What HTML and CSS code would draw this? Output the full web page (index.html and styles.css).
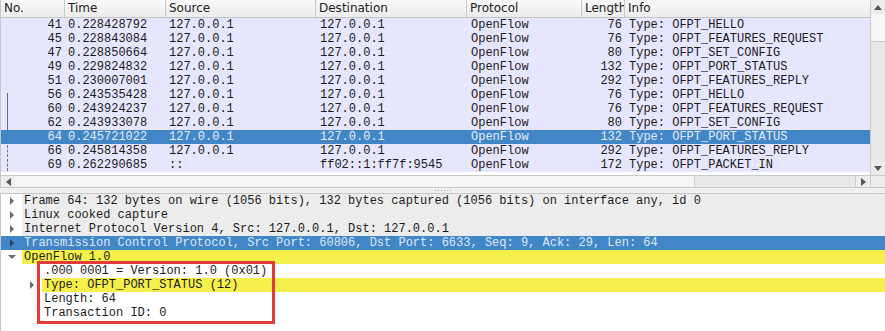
FILE: index.html
```html
<!DOCTYPE html>
<html>
<head>
<meta charset="utf-8">
<link rel="stylesheet" href="styles.css">
</head>
<body>
<div class="app">
  <section class="packet-pane">
    <div class="list">
      <div class="list-header">
        <div class="hcell c-no">No.</div>
        <div class="hcell c-time">Time</div>
        <div class="hcell c-src">Source</div>
        <div class="hcell c-dst">Destination</div>
        <div class="hcell c-proto">Protocol</div>
        <div class="hcell c-len">Length</div>
        <div class="hcell c-info">Info</div>
      </div>
      <div class="list-body">
        <div class="prow"><div class="cell c-no num">41</div><div class="cell c-time">0.228428792</div><div class="cell c-src">127.0.0.1</div><div class="cell c-dst">127.0.0.1</div><div class="cell c-proto">OpenFlow</div><div class="cell c-len num">76</div><div class="cell c-info">Type: OFPT_HELLO</div></div>
        <div class="prow"><div class="cell c-no num">45</div><div class="cell c-time">0.228843084</div><div class="cell c-src">127.0.0.1</div><div class="cell c-dst">127.0.0.1</div><div class="cell c-proto">OpenFlow</div><div class="cell c-len num">76</div><div class="cell c-info">Type: OFPT_FEATURES_REQUEST</div></div>
        <div class="prow"><div class="cell c-no num">47</div><div class="cell c-time">0.228850664</div><div class="cell c-src">127.0.0.1</div><div class="cell c-dst">127.0.0.1</div><div class="cell c-proto">OpenFlow</div><div class="cell c-len num">80</div><div class="cell c-info">Type: OFPT_SET_CONFIG</div></div>
        <div class="prow"><div class="cell c-no num">49</div><div class="cell c-time">0.229824832</div><div class="cell c-src">127.0.0.1</div><div class="cell c-dst">127.0.0.1</div><div class="cell c-proto">OpenFlow</div><div class="cell c-len num">132</div><div class="cell c-info">Type: OFPT_PORT_STATUS</div></div>
        <div class="prow"><div class="cell c-no num">51</div><div class="cell c-time">0.230007001</div><div class="cell c-src">127.0.0.1</div><div class="cell c-dst">127.0.0.1</div><div class="cell c-proto">OpenFlow</div><div class="cell c-len num">292</div><div class="cell c-info">Type: OFPT_FEATURES_REPLY</div></div>
        <div class="prow"><div class="cell c-no num rel-start">56</div><div class="cell c-time">0.243535428</div><div class="cell c-src">127.0.0.1</div><div class="cell c-dst">127.0.0.1</div><div class="cell c-proto">OpenFlow</div><div class="cell c-len num">76</div><div class="cell c-info">Type: OFPT_HELLO</div></div>
        <div class="prow"><div class="cell c-no num rel-solid">60</div><div class="cell c-time">0.243924237</div><div class="cell c-src">127.0.0.1</div><div class="cell c-dst">127.0.0.1</div><div class="cell c-proto">OpenFlow</div><div class="cell c-len num">76</div><div class="cell c-info">Type: OFPT_FEATURES_REQUEST</div></div>
        <div class="prow"><div class="cell c-no num rel-solid">62</div><div class="cell c-time">0.243933078</div><div class="cell c-src">127.0.0.1</div><div class="cell c-dst">127.0.0.1</div><div class="cell c-proto">OpenFlow</div><div class="cell c-len num">80</div><div class="cell c-info">Type: OFPT_SET_CONFIG</div></div>
        <div class="prow selected"><div class="cell c-no num">64</div><div class="cell c-time">0.245721022</div><div class="cell c-src">127.0.0.1</div><div class="cell c-dst">127.0.0.1</div><div class="cell c-proto">OpenFlow</div><div class="cell c-len num">132</div><div class="cell c-info">Type: OFPT_PORT_STATUS</div></div>
        <div class="prow"><div class="cell c-no num rel-dash">66</div><div class="cell c-time">0.245814358</div><div class="cell c-src">127.0.0.1</div><div class="cell c-dst">127.0.0.1</div><div class="cell c-proto">OpenFlow</div><div class="cell c-len num">292</div><div class="cell c-info">Type: OFPT_FEATURES_REPLY</div></div>
        <div class="prow"><div class="cell c-no num rel-dash">69</div><div class="cell c-time">0.262290685</div><div class="cell c-src">::</div><div class="cell c-dst">ff02::1:ff7f:9545</div><div class="cell c-proto">OpenFlow</div><div class="cell c-len num">172</div><div class="cell c-info">Type: OFPT_PACKET_IN</div></div>
      </div>
      <div class="hscroll">
        <div class="sb-btn"><span class="tri tri-left"></span></div>
        <div class="hthumb"></div>
        <div class="htrough"></div>
        <div class="sb-btn"><span class="tri tri-right"></span></div>
      </div>
    </div>
    <div class="vscroll">
      <div class="sb-btn vbtn"><span class="tri tri-up"></span></div>
      <div class="vthumb"></div>
      <div class="vtrough"></div>
      <div class="sb-btn vbtn"><span class="tri tri-down"></span></div>
      <div class="corner"></div>
    </div>
  </section>
  <div class="splitter"><span class="grip"></span></div>
  <section class="detail-pane">
    <div class="drow grey"><span class="twisty"><span class="tw tw-right"></span></span><span class="dtext">Frame 64: 132 bytes on wire (1056 bits), 132 bytes captured (1056 bits) on interface any, id 0</span></div>
    <div class="drow grey"><span class="twisty"><span class="tw tw-right"></span></span><span class="dtext">Linux cooked capture</span></div>
    <div class="drow grey"><span class="twisty"><span class="tw tw-right"></span></span><span class="dtext">Internet Protocol Version 4, Src: 127.0.0.1, Dst: 127.0.0.1</span></div>
    <div class="drow sel"><span class="twisty"><span class="tw tw-right"></span></span><span class="dtext">Transmission Control Protocol, Src Port: 60806, Dst Port: 6633, Seq: 9, Ack: 29, Len: 64</span></div>
    <div class="drow hl"><span class="twisty"><span class="tw tw-down"></span></span><span class="dtext">OpenFlow 1.0</span></div>
    <div class="drow sub"><span class="twisty"></span><span class="dtext">.000 0001 = Version: 1.0 (0x01)</span></div>
    <div class="drow sub hl"><span class="twisty"><span class="tw tw-right"></span></span><span class="dtext">Type: OFPT_PORT_STATUS (12)</span></div>
    <div class="drow sub"><span class="twisty"></span><span class="dtext">Length: 64</span></div>
    <div class="drow sub"><span class="twisty"></span><span class="dtext">Transaction ID: 0</span></div>
    <div class="annotation"></div>
  </section>
</div>
</body>
</html>
```

FILE: styles.css
```css
* { box-sizing: border-box; }
html, body { margin: 0; padding: 0; background: #ffffff; }
body { width: 885px; height: 331px; overflow: hidden; }

.app { display: flex; flex-direction: column; width: 885px; height: 331px; }

/* ---------- packet list ---------- */
.packet-pane { display: flex; height: 188px; flex: none; }
.list { width: 870px; display: flex; flex-direction: column; border-left: 1px solid #c6c6c6; background: #ffffff; }

.list-header {
  display: flex; height: 18px; flex: none;
  background: linear-gradient(#f8f8f8, #ececec);
  border-bottom: 1px solid #c4c4c4;
  font-family: "DejaVu Sans", sans-serif; font-size: 12px; color: #222;
}
.hcell {
  line-height: 17px; padding-left: 3px; white-space: nowrap; overflow: hidden;
  border-right: 1px solid #c8c8c8;
}
.hcell.c-info { border-right: none; }

.c-no { width: 64px; }
.c-time { width: 101px; }
.c-src { width: 150px; }
.c-dst { width: 151px; }
.c-proto { width: 115px; }
.c-len { width: 43px; }
.c-info { flex: 1; }

.list-body { flex: 1; font-family: "Liberation Mono", monospace; font-size: 12px; color: #1c1c1c; }
.prow { display: flex; height: 14px; background: #e7e6ff; }
.prow.selected { background: #4186c7; color: #e8ebfb; }
.cell { line-height: 14px; white-space: nowrap; overflow: hidden; padding-left: 3px; }
.cell.c-dst, .cell.c-proto, .cell.c-info { padding-left: 4px; }
.cell.num { text-align: right; padding-left: 0; padding-right: 3px; }

.c-no { position: relative; }
.rel-start::before, .rel-solid::before, .rel-dash::before {
  content: ""; position: absolute; left: 6px; width: 0; border-left: 1px solid #6a6a6a;
}
.rel-start::before { top: 5px; bottom: 0; }
.rel-solid::before { top: 0; bottom: 0; }
.rel-dash::before { top: 1px; bottom: 1px; border-left: 1px dashed #777; }

/* scrollbars */
.hscroll { display: flex; height: 13px; flex: none; border-top: 1px solid #c9c9c9; border-bottom: 1px solid #c9c9c9; background: #ececec; }
.sb-btn { width: 14px; flex: none; display: flex; align-items: center; justify-content: center; }
.hthumb { width: 680px; background: #f6f6f6; border-right: 1px solid #cdcdcd; }
.htrough { flex: 1; background: #e8e8e8; border-right: 1px solid #cdcdcd; }

.vscroll { width: 15px; display: flex; flex-direction: column; border-left: 1px solid #c9c9c9; background: #ececec; }
.vbtn { width: auto; height: 14px; }
.vthumb { height: 28px; background: #f6f6f6; border-bottom: 1px solid #cdcdcd; }
.vtrough { flex: 1; background: #e8e8e8; }
.corner { height: 13px; background: #ececec; border-top: 1px solid #c9c9c9; border-bottom: 1px solid #c9c9c9; }

.tri { width: 0; height: 0; border-style: solid; }
.tri-left { border-width: 4px 5px 4px 0; border-color: transparent #555 transparent transparent; }
.tri-right { border-width: 4px 0 4px 5px; border-color: transparent transparent transparent #555; }
.tri-up { border-width: 0 4px 5px 4px; border-color: transparent transparent #555 transparent; }
.tri-down { border-width: 5px 4px 0 4px; border-color: #555 transparent transparent transparent; }

/* splitter */
.splitter { height: 5px; flex: none; background: #efefef; display: flex; justify-content: center; align-items: center; }
.grip { width: 17px; height: 1px; background-image: radial-gradient(circle, #a8a8a8 0.6px, transparent 0.8px); background-size: 3px 1px; }

/* ---------- packet details ---------- */
.detail-pane {
  position: relative; flex: 1; background: #ffffff;
  border-top: 1px solid #c6c6c6; border-left: 1px solid #c6c6c6;
  font-family: "Liberation Mono", monospace; font-size: 12px; color: #1c1c1c;
}
.drow { display: flex; height: 14px; line-height: 14px; white-space: nowrap; }
.drow.sub { padding-left: 20px; }
.twisty { width: 21px; flex: none; display: flex; align-items: center; justify-content: center; }
.dtext { flex: 1; padding-left: 2px; overflow: hidden; }
.drow.grey .dtext { background: #ececec; }
.drow.hl .dtext { background: #f4ef4a; }
.drow.sel { background: #4186c7; color: #dfe8f8; }

.tw { width: 0; height: 0; border-style: solid; }
.tw-right { border-width: 4px 0 4px 4px; border-color: transparent transparent transparent #6a6a6a; }
.tw-down { border-width: 4px 4px 0 4px; border-color: #6a6a6a transparent transparent transparent; }
.drow.sel .tw-right { border-left-color: #2a3f58; }

.annotation {
  position: absolute; left: 36px; top: 67px; width: 238px; height: 63px;
  border: 3px solid #e33a3a;
}
```
